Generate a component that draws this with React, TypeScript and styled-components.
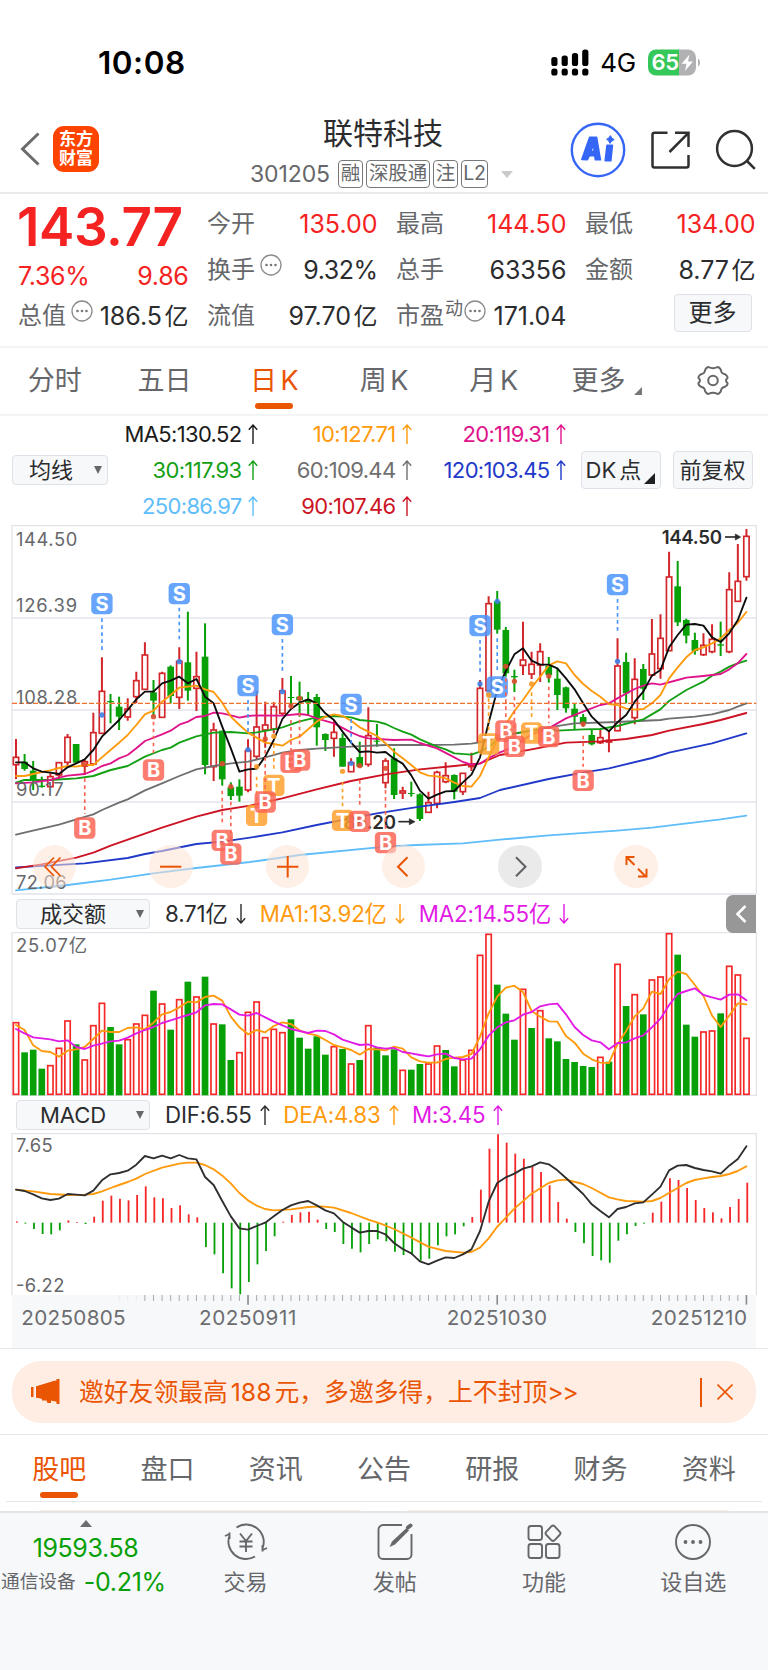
import React from "react";
import styled, { createGlobalStyle } from "styled-components";

const ORANGE = "#ea5504";
const UP = "#f52222";
const DOWN = "#07a007";
const INK = "#2b2c2e";
const GREY = "#66676a";
const LINE = "#e6e7ea";
const FONT = `Inter, "Noto Sans CJK SC", sans-serif`;

const Global = createGlobalStyle`
  * { box-sizing: border-box; }
  body { margin: 0; background: #fff; font-family: ${FONT}; color: ${INK}; -webkit-font-smoothing: antialiased; }
`;

const Page = styled.div`
  width: 768px;
  height: 1670px;
  display: flex;
  flex-direction: column;
  overflow: hidden;
  background: #fff;
`;

/* ---------- status bar ---------- */
const StatusBar = styled.div`
  height: 108px;
  flex: none;
  padding: 17px 67px 0 98px;
  display: flex;
  align-items: center;
  justify-content: space-between;
  color: #000;
`;
const Clock = styled.div`
  font-size: 31.5px;
  font-weight: 600;
  line-height: 36px;
  letter-spacing: 0.5px;
`;
const StatusRight = styled.div`
  display: flex;
  align-items: center;
  height: 36px;
`;
const Network = styled.span`
  font-size: 26px;
  line-height: 36px;
  margin: 1px 12px 0 11px;
  letter-spacing: -0.2px;
`;

/* ---------- header ---------- */
const Header = styled.header`
  height: 86px;
  flex: none;
  border-bottom: 2px solid #e8e9ea;
  display: grid;
  grid-template-columns: 250px 1fr 206px;
`;
const HeaderLeft = styled.div`
  display: flex;
  align-items: center;
  padding: 0 0 2px 19px;
`;
const Logo = styled.div`
  width: 46px;
  height: 46px;
  margin-left: 12px;
  border-radius: 11px;
  background: #ff4400;
  color: #fff;
  font-size: 17px;
  font-weight: 700;
  line-height: 19px;
  text-align: center;
  padding-top: 4px;
`;
const HeaderMid = styled.div`
  padding-top: 6px;
`;
const StockName = styled.h1`
  margin: 0 0 0 73px;
  font-size: 30px;
  font-weight: 400;
  line-height: 39px;
  white-space: nowrap;
`;
const CodeRow = styled.div`
  display: flex;
  align-items: center;
  gap: 3px;
  margin-top: 7px;
  height: 28px;
  color: ${GREY};
`;
const Code = styled.span`
  font-size: 23px;
  line-height: 28px;
  width: 85px;
  letter-spacing: -0.1px;
`;
const Tag = styled.span<{ $w: number }>`
  width: ${(p) => p.$w}px;
  height: 28px;
  border: 1.5px solid #77787a;
  border-radius: 4px;
  font-size: 19.5px;
  line-height: 25px;
  text-align: center;
  white-space: nowrap;
  letter-spacing: -0.2px;
`;
const Caret = styled.i<{ $w: number; $h: number; $c: string; $up?: boolean }>`
  width: 0;
  height: 0;
  flex: none;
  border-left: ${(p) => p.$w / 2}px solid transparent;
  border-right: ${(p) => p.$w / 2}px solid transparent;
  ${(p) => (p.$up ? "border-bottom" : "border-top")}: ${(p) => p.$h}px solid ${(p) => p.$c};
`;
const TagCaret = styled(Caret)`
  margin-left: 10px;
`;
const HeaderRight = styled.div`
  display: flex;
  align-items: center;
  gap: 25px;
  padding: 0 0 1px 8px;
  & > svg {
    flex: none;
  }
`;

/* ---------- quote ---------- */
const Quote = styled.section`
  height: 154px;
  flex: none;
  border-bottom: 2px solid #f3f4f5;
  padding: 7px 12px 0 18px;
  display: grid;
  grid-template-columns: repeat(4, 170.500px);
  column-gap: 18.500px;
`;
const QuoteCol = styled.div`
  display: flex;
  flex-direction: column;
`;
const Price = styled.div`
  height: 54px;
  font-size: 53px;
  line-height: 52px;
  font-weight: 600;
  color: ${UP};
  letter-spacing: -0.4px;
  margin-left: -1px;
`;
const Change = styled.div`
  height: 38px;
  padding-top: 3px;
  display: flex;
  align-items: center;
  justify-content: space-between;
  font-size: 25px;
  color: ${UP};
  letter-spacing: -0.3px;
`;
const Cell = styled.div`
  height: 46px;
  display: flex;
  align-items: center;
  white-space: nowrap;
`;
const Label = styled.span`
  font-size: 24px;
  line-height: 46px;
  color: ${GREY};
`;
const Value = styled.span<{ $c?: string }>`
  margin-left: auto;
  font-size: 25px;
  line-height: 46px;
  letter-spacing: 0;
  color: ${(p) => p.$c || INK};
`;
const TightValue = styled(Value)`
  letter-spacing: -0.5px;
`;
const Unit = styled.span`
  font-size: 24px;
  letter-spacing: 0;
  margin-left: 2.5px;
`;
const Sup = styled.sup`
  font-size: 18px;
  line-height: 20px;
  color: ${GREY};
  margin: -14px -4px 0 1px;
`;
const InfoSvg = styled.svg`
  margin: -10px 0 0 5px;
  flex: none;
`;
const MoreButton = styled.button`
  margin: 1px 4px 0 auto;
  width: 78px;
  height: 38px;
  padding: 0;
  border: 1.5px solid #dfe1e8;
  border-radius: 4px;
  background: #f7f8fa;
  font: 24px/34px ${FONT};
  color: ${INK};
`;

/* ---------- tabs ---------- */
const Tabs = styled.nav<{ $pad: number; $top: number }>`
  height: 66px;
  flex: none;
  display: grid;
  grid-template-columns: repeat(7, minmax(0, 1fr));
  padding: ${(p) => p.$top}px ${(p) => p.$pad}px 0;
`;
const Tab = styled.div<{ $on?: boolean; $shift?: number }>`
  display: flex;
  flex-direction: column;
  align-items: center;
  white-space: nowrap;
  padding-left: ${(p) => p.$shift || 0}px;
  font-size: 27px;
  line-height: 40px;
  word-spacing: -4px;
  color: ${(p) => (p.$on ? ORANGE : GREY)};
  &::after {
    content: "";
    width: 38px;
    height: 6px;
    margin-top: 1.500px;
    border-radius: 3px;
    background: ${(p) => (p.$on ? ORANGE : "transparent")};
  }
`;
const TabText = styled.span`
  display: flex;
  align-items: center;
`;
const Corner = styled.i<{ $s: number; $c: string }>`
  width: 0;
  height: 0;
  align-self: flex-end;
  border-left: ${(p) => p.$s}px solid transparent;
  border-bottom: ${(p) => p.$s}px solid ${(p) => p.$c};
`;
const TabCorner = styled(Corner)`
  margin: 0 0 6px 9px;
`;

/* ---------- moving averages ---------- */
const MaSection = styled.section`
  height: 111px;
  flex: none;
  border-top: 2px solid #f3f4f5;
  padding: 0 12px 3px;
  display: grid;
  grid-template-columns: 96px 459px 1fr;
  align-items: center;
`;
const SmallButton = styled.button<{ $w: number; $h: number }>`
  position: relative;
  width: ${(p) => p.$w}px;
  height: ${(p) => p.$h}px;
  flex: none;
  padding: 0;
  border: 1.5px solid #dfe1e8;
  border-radius: 4px;
  background: #f7f8fa;
  font: 22px/26px ${FONT};
  color: ${INK};
  white-space: nowrap;
  display: flex;
  align-items: center;
  justify-content: center;
`;
const DropButton = styled(SmallButton)`
  justify-content: space-between;
  padding: 0 5px 0 ${(p) => (p.$w > 100 ? 23 : 16)}px;
`;
const DkButton = styled(SmallButton)`
  justify-content: flex-start;
  padding-left: 4px;
  word-spacing: -3px;
`;
const DkCorner = styled(Corner)`
  position: absolute;
  right: 5px;
  bottom: 4px;
`;
const MaGrid = styled.div`
  display: grid;
  grid-template-columns: 150px 154px 154px;
  grid-auto-rows: 35.9px;
`;
const MaItem = styled.div<{ $c: string }>`
  display: flex;
  align-items: center;
  justify-content: flex-end;
  gap: 6.500px;
  font-size: 22px;
  letter-spacing: -0.65px;
  color: ${(p) => p.$c};
  white-space: nowrap;
`;
const ButtonPair = styled.div`
  display: flex;
  gap: 12px;
  padding-left: 13.500px;
`;

/* ---------- charts ---------- */
const ChartWrap = styled.div`
  position: relative;
  flex: none;
`;
const Chart = styled.svg`
  display: block;
  flex: none;
  font-family: ${FONT};
`;
const Controls = styled.div`
  position: absolute;
  left: 33px;
  top: 320px;
  display: flex;
  gap: 72.9px;
`;
const RoundButton = styled.div<{ $grey?: boolean }>`
  width: 43.4px;
  height: 43.4px;
  border-radius: 50%;
  background: ${(p) => (p.$grey ? "rgba(226,226,226,.72)" : "rgba(253,226,211,.55)")};
`;
const IndicatorRow = styled.div`
  position: relative;
  height: 37px;
  flex: none;
  padding-left: 16px;
  display: flex;
  align-items: center;
`;
const Indicator = styled.span<{ $c: string; $gap: number }>`
  margin-left: ${(p) => p.$gap}px;
  display: flex;
  align-items: center;
  gap: 8px;
  font-size: 22.3px;
  line-height: 30px;
  letter-spacing: -0.15px;
  color: ${(p) => p.$c};
  white-space: nowrap;
`;
const Collapse = styled.div`
  margin-left: auto;
  margin-right: 12px;
  width: 30px;
  height: 38px;
  border-radius: 7px 0 0 7px;
  background: #979797;
  display: flex;
  align-items: center;
  justify-content: center;
`;

/* ---------- banner ---------- */
const BannerWrap = styled.div`
  height: 87px;
  flex: none;
  border-top: 1px solid ${LINE};
  border-bottom: 1.5px solid ${LINE};
  padding: 12px 12px 0;
`;
const Banner = styled.div`
  height: 62px;
  border-radius: 29px;
  background: #ffede4;
  color: ${ORANGE};
  display: flex;
  align-items: center;
  padding: 0 23.500px 0 19px;
  font-size: 24.8px;
  white-space: nowrap;
`;
const BannerText = styled.span`
  margin: -5px 0 0 19px;
  flex: 1;
  word-spacing: -4px;
`;
const Chevrons = styled.span`
  letter-spacing: -1.500px;
`;
const BannerSplit = styled.i`
  width: 1.5px;
  height: 29px;
  background: ${ORANGE};
  margin-right: 15px;
`;
const FeedEdge = styled.div`
  height: 10px;
  flex: none;
  overflow: hidden;
  margin: 0 6px;
  border-top: 1.5px solid ${LINE};
  padding: 8px 28px 0;
  display: flex;
  gap: 36px;
`;
const FeedCard = styled.div`
  flex: 1;
  height: 10px;
  border-radius: 8px 8px 0 0;
  background: #fdeee6;
`;

/* ---------- bottom bar ---------- */
const Bottom = styled.footer`
  flex: 1;
  border-top: 2px solid #e3e4e7;
  background: #f7f8fa;
  display: grid;
  grid-template-columns: 171px repeat(4, 149.25px);
`;
const IndexCell = styled.div`
  display: flex;
  flex-direction: column;
  align-items: center;
  padding-top: 7px;
  color: ${DOWN};
  font-size: 25px;
`;
const IndexValue = styled.div`
  line-height: 30px;
  margin-top: 6px;
  letter-spacing: -0.4px;
`;
const IndexRow = styled.div`
  display: flex;
  align-items: center;
  align-self: flex-start;
  gap: 8px;
  margin: 3px 0 0 1px;
  line-height: 32px;
  letter-spacing: -0.3px;
  white-space: nowrap;
`;
const IndexName = styled.span`
  font-size: 18.7px;
  letter-spacing: 0;
  color: ${GREY};
`;
const NavItem = styled.div`
  display: flex;
  flex-direction: column;
  align-items: center;
  padding-top: 10px;
  font-size: 22px;
  line-height: 30px;
  color: ${GREY};
`;
const NavIcon = styled.svg`
  margin-bottom: 6px;
  overflow: visible;
`;

const Info = () => (
  <InfoSvg width="22" height="22" viewBox="0 0 22 22" fill="none" stroke="#8a8b8e">
    <circle cx="11" cy="11" r="10" strokeWidth="1.3" />
    <g fill="#77787b" stroke="none">
      <circle cx="6.5" cy="11" r="1.3" />
      <circle cx="11" cy="11" r="1.3" />
      <circle cx="15.5" cy="11" r="1.3" />
    </g>
  </InfoSvg>
);

const Arrow = ({ down }: { down?: boolean }) => (
  <svg width="10" height="20" viewBox="0 0 10 20" fill="none" stroke="currentColor" strokeWidth="1.4">
    <path d={down ? "M5 0V19M.8 14.3L5 19l4.2-4.7" : "M5 20V1M.8 5.7L5 1l4.2 4.7"} />
  </svg>
);

/* ---------- chart data: all series share a three-units-per-pixel grid ---------- */
const X0 = 48;
const STEP = 25.78;
const bx = (i: number) => X0 + STEP * i;

type Candle = [number, number, number, number, number];
// [rising, bodyTop, bodyBottom, high, low]
const candles: Candle[] = [
  [1,712,734,657,777],[0,725,747,702,752],[0,752,780,723,810],[0,797,801,770,803],[1,770,800,760,802],
  [1,728,765,727,780],[1,652,727,642,735],[0,672,728,672,728],[1,725,738,720,765],[1,638,732,578,735],
  [1,514,640,412,642],[0,543,547,522,610],[0,560,590,530,630],[1,567,591,535,602],[1,482,530,455,550],
  [1,405,508,367,510],[0,517,542,480,590],[1,460,592,455,593],[0,440,528,436,550],[1,424,532,382,567],
  [0,427,512,275,542],[1,470,505,395,573],[0,410,735,310,763],[1,630,740,608,783],[0,632,778,632,797],
  [0,802,828,787,840],[0,800,827,778,845],[1,692,810,658,817],[1,621,709,512,717],[1,615,630,545,683],
  [1,560,627,547,640],[1,513,580,474,585],[0,531,534,468,560],[0,530,540,485,590],[0,538,548,516,585],
  [0,531,622,522,677],[0,642,660,640,693],[1,637,655,600,710],[0,654,740,640,740],[1,728,755,715,757],
  [0,711,740,665,740],[1,647,733,562,740],[0,662,665,612,680],[1,723,788,715,805],[0,715,825,685,837],
  [1,813,819,800,837],[0,819,822,785,830],[0,823,897,820,903],[1,848,877,815,878],[1,757,850,752,865],
  [1,767,785,727,790],[0,765,815,763,838],[1,760,815,760,825],[1,735,740,698,753],[1,505,665,480,667],
  [1,251,512,229,514],[0,244,329,213,341],[0,330,460,321,470],[0,468,472,449,516],[1,420,436,305,465],
  [1,433,462,395,477],[1,395,435,370,486],[0,437,465,411,488],[0,476,525,445,570],[0,502,565,500,578],
  [0,566,590,552,630],[0,591,612,582,620],[0,645,673,628,676],[1,653,668,628,672],[1,661,666,630,697],
  [1,438,632,355,634],[0,426,520,398,550],[1,478,593,415,613],[0,447,506,432,540],[1,402,465,297,470],
  [1,355,446,283,476],[1,171,392,95,393],[0,199,307,123,318],[0,300,347,296,370],[0,360,393,338,404],
  [1,376,404,340,408],[1,358,395,313,400],[0,373,377,305,408],[1,209,395,157,400],[1,184,244,72,245],
  [1,49,170,27,182],
];

// one value per bar
const perBar = (vals: number[]) => vals.map((v, i) => `${bx(i).toFixed(1)},${v}`).join(" ");

const ma5 = perBar([727,727,745,755,758,762,742,730,718,690,650,625,600,570,538,515,515,490,482,470,490,477,530,550,620,685,755,748,746,710,660,597,567,548,538,550,580,600,635,668,696,694,698,696,716,731,766,812,836,824,814,813,787,764,712,608,510,453,403,385,422,434,434,445,475,508,550,590,615,634,607,585,545,515,467,450,382,345,314,312,317,352,366,340,300,233]);
const ma10 = perBar([768,768,762,756,751,744,738,740,735,735,712,690,668,645,615,583,572,545,525,503,500,497,508,516,548,590,615,638,653,668,672,677,660,650,628,605,590,583,588,602,622,635,648,670,695,715,735,757,767,769,775,788,798,800,768,712,660,613,573,540,503,470,436,424,430,465,492,513,530,552,555,566,569,567,550,525,475,442,412,390,382,370,355,330,308,276]);
const ma20 = "48,790 99,787 151,780 177,773 203,767 254,762 280,752 306,738 332,730 357,715 383,705 409,685 435,663 486,643 512,632 538,614 564,605 589,591 615,588 641,578 667,580 693,586 718,593 744,588 770,586 847,587 899,582 924,585 950,595 1002,610 1053,637 1079,648 1105,655 1182,660 1234,659 1260,669 1311,685 1363,712 1389,726 1414,734 1440,731 1466,714 1500,697 1543,680 1569,660 1595,643 1646,625 1698,595 1749,575 1801,555 1827,550 1852,535 1904,507 1930,497 1956,490 1981,494 2033,480 2059,473 2110,468 2162,462 2188,448 2213,430 2239,402";
const ma30 = "48,788 73,780 151,780 229,775 280,768 332,750 383,738 435,710 486,690 512,683 538,668 589,649 641,638 693,636 744,640 770,637 821,628 847,622 899,604 950,592 1002,588 1053,592 1079,600 1131,605 1157,612 1182,624 1208,635 1234,644 1260,658 1311,680 1337,688 1363,700 1414,704 1440,695 1466,680 1500,655 1543,640 1595,632 1646,628 1672,632 1749,628 1801,627 1852,618 1930,598 1981,568 2007,543 2059,510 2110,485 2136,467 2162,455 2188,440 2213,430 2239,422";
const ma60 = "48,944 73,938 177,914 229,898 280,883 306,870 357,848 383,838 435,811 486,790 538,768 589,748 641,738 693,730 744,725 796,712 847,698 899,690 950,686 1053,680 1157,675 1260,675 1363,674 1414,671 1440,667 1500,650 1550,640 1646,622 1724,610 1852,606 1981,600 2007,596 2085,590 2136,583 2188,570 2213,560 2239,550";
const ma90 = "48,1045 125,1033 229,1013 280,998 332,977 409,950 486,923 589,890 667,870 750,857 847,835 950,808 1053,783 1157,763 1260,748 1363,738 1440,730 1500,705 1595,688 1698,668 1801,664 1878,657 1956,645 2007,632 2110,612 2162,600 2239,579";
const ma120 = "48,1042 254,1030 383,1014 435,1002 486,993 589,972 667,965 750,953 847,937 950,915 1053,895 1131,880 1260,860 1363,846 1440,834 1500,810 1646,777 1749,758 1827,745 1956,714 2007,698 2136,670 2239,640";
const ma250 = "48,1111 203,1095 332,1079 460,1060 589,1044 750,1026 899,1005 1157,980 1250,975 1389,970 1500,959 1646,946 1852,932 1956,923 2036,913 2162,898 2239,887";

type Signal = [number, "S" | "B" | "T", number, number, number, number];
// [bar, kind, badgeCentre, dot, dashStart, dashEnd]
const signals: Signal[] = [
  [10,"S",251,585,295,400],[19,"S",221,425,263,368],[28,"T",886,740,770,845],[27,"S",497,689,540,642],
  [31,"S",314,515,357,462],[39,"S",553,730,597,680],[54,"S",317,492,360,465],[56,"S",501,244,355,460],
  [70,"S",194,424,237,342],[8,"B",924,734,775,882],[16,"B",750,590,605,708],[24,"B",961,731,812,918],
  [25,"B",1002,800,845,965],[30,"T",796,649,672,755],[29,"B",846,657,690,808],[32,"B",727,558,600,690],
  [33,"B",720,535,578,680],[38,"T",901,754,785,860],[40,"B",904,737,780,862],[43,"B",968,745,810,927],
  [55,"T",672,525,535,632],[60,"T",639,492,517,597],[57,"B",633,439,475,592],[58,"B",679,484,530,640],
  [62,"B",650,468,500,610],[66,"B",781,612,647,740],
];
const SIGNAL_FILL = { S: "#4a94fb", B: "#fc6453", T: "#ffa02b" };
const SIGNAL_DOT = { S: "#3f7fe6", B: "#dd4a2e", T: "#f59b26" };

const volTops = [398,489,481,538,527,475,393,465,510,407,340,413,465,449,402,376,304,342,421,329,277,321,262,402,405,512,488,367,336,443,418,428,390,445,478,441,496,470,479,522,512,407,474,498,480,541,541,524,522,468,482,531,510,481,196,133,286,373,451,298,416,362,447,456,509,518,530,533,502,517,223,350,314,375,270,261,131,196,406,442,426,423,372,229,255,445];
const VOL_RED = new Set([0,4,5,6,8,9,10,13,14,15,17,19,21,23,26,27,28,29,30,31,37,39,41,45,48,49,52,53,54,55,59,61,68,70,72,74,75,76,80,81,83,84,85]);
const volMa1 = perBar([405,420,466,483,486,500,482,478,471,447,422,426,426,414,412,418,398,373,366,352,335,337,321,317,332,380,412,433,420,427,408,397,402,421,431,436,450,465,472,480,494,477,478,481,470,476,502,514,518,518,507,503,501,492,440,370,320,293,287,306,363,380,394,395,438,458,491,508,518,519,462,423,379,355,305,312,268,245,252,285,318,377,411,377,340,343]);
const volMa2 = perBar([417,430,442,445,448,454,451,471,477,467,461,454,452,443,430,420,411,399,391,383,375,367,346,342,343,358,374,377,369,382,395,406,417,423,429,422,423,433,449,457,465,463,472,476,474,486,490,495,499,493,491,504,508,506,478,437,412,397,391,374,366,349,343,341,373,411,435,451,457,478,459,457,445,436,412,386,345,312,303,295,315,322,329,314,313,331]);

const macdEnds = [379,386,402,417,418,406,376,381,387,365,317,302,311,316,300,274,307,310,339,331,358,367,456,478,535,580,598,561,508,468,424,380,360,352,350,374,402,411,447,461,472,447,433,439,470,480,480,497,491,451,424,418,394,366,284,161,118,143,176,191,216,231,271,321,371,411,445,483,496,503,437,418,393,386,353,320,250,255,279,315,339,352,370,336,312,263];
const dif = perBar([284,288,298,310,315,311,297,299,301,287,256,238,234,227,209,183,190,182,190,180,190,193,246,270,318,364,400,404,393,383,364,345,331,323,318,331,346,355,380,397,413,408,408,418,444,462,475,499,508,497,487,489,478,463,408,320,264,247,236,221,214,202,208,226,249,273,297,328,348,367,342,336,325,322,299,275,226,212,210,219,225,229,236,212,192,154]);
const dea = "48,284 99,289 151,297 203,300 254,299 280,297 306,289 332,279 357,270 383,261 409,251 435,237 486,218 538,206 564,203 589,203 615,210 641,223 667,242 693,266 718,294 744,316 770,332 795,342 821,346 873,343 925,336 964,334 1002,338 1053,354 1105,374 1140,385 1182,402 1234,428 1285,455 1337,468 1389,473 1414,471 1440,458 1466,430 1491,396 1543,341 1595,296 1646,264 1672,256 1698,254 1749,267 1775,279 1827,307 1852,313 1878,318 1930,320 1956,318 1981,309 2007,294 2033,279 2059,264 2084,255 2110,250 2136,246 2162,243 2188,237 2213,228 2239,214";

const Poly = ({ pts, c, w = 5.6 }: { pts: string; c: string; w?: number }) => (
  <polyline points={pts} fill="none" stroke={c} strokeWidth={w} strokeLinejoin="round" strokeLinecap="round" />
);

const AxisText = ({ x = 48, y, len, children }: { x?: number; y: number; len: number; children: string }) => (
  <text x={x} y={y + 20} fontSize="55" fill="#66676a" textLength={len}>{children}</text>
);

function PriceChart() {
  return (
    <ChartWrap>
      <Chart width="768" height="370" viewBox="0 15 2304 1110">
        <path d="M36 17H2269V1122H36Z" fill="none" stroke="#e2e4ea" strokeWidth="4" />
        <path d="M36 294H2269M36 570H2269M36 846H2269" stroke="#e4e6ee" strokeWidth="5" />
        {candles.map(([up, t, b, hi, lo], i) => {
          const x = bx(i);
          return up ? (
            <g key={i} stroke="#d3262b" fill="none">
              <path d={`M${x} ${hi}V${t}M${x} ${b}V${lo}`} strokeWidth="6" />
              <rect x={x - 8} y={t} width="16" height={b - t} strokeWidth="5" />
            </g>
          ) : (
            <g key={i} fill="#07a007">
              <rect x={x - 3} y={hi} width="6" height={lo - hi} />
              <rect x={x - 10} y={t} width="20" height={b - t} />
            </g>
          );
        })}
        <Poly pts={ma250} c="#5fbdfa" />
        <Poly pts={ma120} c="#2139c8" />
        <Poly pts={ma90} c="#cc1424" />
        <Poly pts={ma60} c="#6f6f70" />
        <Poly pts={ma30} c="#14a014" />
        <Poly pts={ma20} c="#e0148a" />
        <Poly pts={ma10} c="#ff9a0c" />
        <Poly pts={ma5} c="#0c0c0c" />
        <path d="M36 550H2269" stroke="#f0702c" strokeWidth="4" strokeDasharray="15 6" />
        <AxisText y={59} len={184}>144.50</AxisText>
        <AxisText y={255} len={183}>126.39</AxisText>
        <AxisText y={532} len={184}>108.28</AxisText>
        <AxisText y={809} len={143}>90.17</AxisText>
        <AxisText y={1086} len={152}>72.06</AxisText>
        <g fill={INK} stroke={INK} strokeWidth="5">
          <text x="1985" y="72" fontSize="56" fontWeight="600" strokeWidth="0" textLength="181">144.50</text>
          <path d="M2175 51H2214" />
          <path d="M2206 42L2222 51L2206 60Z" strokeWidth="2" />
          <text x="1031" y="926" fontSize="56" fontWeight="600" strokeWidth="0" textLength="157">86.20</text>
          <path d="M1195 905H1236" />
          <path d="M1228 896L1245 905L1228 914Z" strokeWidth="2" />
        </g>
        {signals.map(([i, k, y, dot, a, b], n) => (
          <g key={n}>
            <path d={`M${bx(i)} ${a}V${b}`} stroke={SIGNAL_FILL[k]} strokeWidth="5" strokeDasharray="11 10" />
            <circle cx={bx(i)} cy={dot} r="8" fill={SIGNAL_DOT[k]} fillOpacity=".9" />
            <rect x={bx(i) - 32} y={y - 32} width="64" height="64" rx="13" fill={SIGNAL_FILL[k]} fillOpacity=".84" />
            <text x={bx(i)} y={y + 21.5} fontSize="60" fontWeight="700" fill="#fff" textAnchor="middle">{k}</text>
          </g>
        ))}
      </Chart>
      <Controls>
        <RoundButton>
          <svg viewBox="0 0 43.4 43.4" fill="none" stroke={ORANGE} strokeWidth="1.7"><path d="M21 12.5L12 21.7L21 31M27.5 12.5L18.5 21.7L27.5 31" /></svg>
        </RoundButton>
        <RoundButton>
          <svg viewBox="0 0 43.4 43.4" fill="none" stroke={ORANGE} strokeWidth="2"><path d="M11 21.7H32.4" /></svg>
        </RoundButton>
        <RoundButton>
          <svg viewBox="0 0 43.4 43.4" fill="none" stroke={ORANGE} strokeWidth="2"><path d="M11 21.7H32.4M21.7 11V32.4" /></svg>
        </RoundButton>
        <RoundButton>
          <svg viewBox="0 0 43.4 43.4" fill="none" stroke={ORANGE} strokeWidth="2"><path d="M25.5 12.2L16 21.7L25.5 31.2" /></svg>
        </RoundButton>
        <RoundButton $grey>
          <svg viewBox="0 0 43.4 43.4" fill="none" stroke="#5f6063" strokeWidth="2"><path d="M18 12.2L27.5 21.7L18 31.2" /></svg>
        </RoundButton>
        <RoundButton>
          <svg viewBox="0 0 43.4 43.4" fill="none" stroke={ORANGE} strokeWidth="2"><path d="M12.5 20V12H20.5M12.5 12L20.5 20M24 23.7L32 31.7M32.5 23.7V31.5H24" /></svg>
        </RoundButton>
      </Controls>
    </ChartWrap>
  );
}

function VolumeChart() {
  return (
    <Chart width="768" height="164" viewBox="0 126 2304 492">
      <path d="M36 128H2269V616H36Z" fill="none" stroke="#e2e4ea" strokeWidth="4" />
      {volTops.map((t, i) =>
        VOL_RED.has(i) ? (
          <rect key={i} x={bx(i) - 8} y={t} width="16" height={613 - t} fill="#fff" stroke="#f52727" strokeWidth="5" />
        ) : (
          <rect key={i} x={bx(i) - 10} y={t - 2} width="20" height={618 - t} fill="#07a007" />
        )
      )}
      <Poly pts={volMa1} c="#ff9a0c" />
      <Poly pts={volMa2} c="#e21ae6" />
      <AxisText y={166} len={213}>25.07亿</AxisText>
    </Chart>
  );
}

function MacdChart() {
  return (
    <Chart width="768" height="215" viewBox="0 114 2304 645">
      <path d="M36 600H2268V759H36Z" fill="#f7f8fa" />
      <path d="M36 600V116H2269V600" fill="none" stroke="#e2e4ea" strokeWidth="4" />
      {macdEnds.map((e, i) => (
        <path key={i} d={`M${bx(i) + 2.5} 383V${e}`} stroke={e < 383 ? "#f52727" : "#07a007"} strokeWidth="5.5" />
      ))}
      <Poly pts={dea} c="#ff9a0c" />
      <Poly pts={dif} c="#2e2e2e" />
      {macdEnds.map((_, i) => {
        const major = i === 27 || i === 56 || i === 85;
        return i >= 12 ? (
          <path key={i} d={`M${bx(i)} 600V${major ? 629 : 618}`} stroke={major ? "#8c8d90" : "#a8a9ac"} strokeWidth={major ? 5 : 3} opacity={i < 15 ? 0.15 : 1} />
        ) : null;
      })}
      <AxisText y={151} len={110}>7.65</AxisText>
      <AxisText y={570} len={145}>-6.22</AxisText>
      <g fontSize="62" fill="#6c6d70">
        <text x="64" y="691" textLength="313">20250805</text>
        <text x="597" y="691" textLength="292">20250911</text>
        <text x="1340" y="691" textLength="301">20251030</text>
        <text x="1952" y="691" textLength="289">20251210</text>
      </g>
    </Chart>
  );
}

export default function App() {
  return (
    <>
      <Global />
      <Page>
        <StatusBar>
          <Clock>10:08</Clock>
          <StatusRight>
            <svg width="38" height="27" viewBox="0 0 38 27">
              {[0, 1, 2, 3].map((n) => (
                <g key={n}>
                  <rect x={n * 10.3 + 0.3} y={[8, 6.5, 4, 0.5][n]} width="6.2" height={[9, 10.5, 13, 16.5][n]} rx="2.6" />
                  <rect x={n * 10.3 + 0.3} y="19.5" width="6.2" height="7" rx="2.6" />
                </g>
              ))}
            </svg>
            <Network>4G</Network>
            <svg width="53" height="27" viewBox="0 0 53 27">
              <path d="M8 .5H31V26.5H8A8 8 0 0 1 0 18.5V8.5A8 8 0 0 1 8 .5Z" fill="#34c759" />
              <path d="M31 .5H40A8 8 0 0 1 48 8.5V18.5A8 8 0 0 1 40 26.5H31Z" fill="#b1b1b3" />
              <path d="M50 9.5C51.5 10.5 52 12 52 13.5S51.5 16.5 50 17.5Z" fill="#b1b1b3" />
              <text x="3.5" y="21.3" fontSize="22" fontWeight="600" fill="#fff" textLength="27.5" fontFamily="Inter">65</text>
              <path d="M41.5 5.5L33.5 14.8H38.5L37 22L45 12.5H40Z" fill="#fff" />
            </svg>
          </StatusRight>
        </StatusBar>

        <Header>
          <HeaderLeft>
            <svg width="22" height="34" viewBox="0 0 22 34" fill="none" stroke="#6b6b6d" strokeWidth="3">
              <path d="M19.5 1.5L3.5 17L19.5 32.5" />
            </svg>
            <Logo>东方<br />财富</Logo>
          </HeaderLeft>
          <HeaderMid>
            <StockName>联特科技</StockName>
            <CodeRow>
              <Code>301205</Code>
              <Tag $w={25}>融</Tag>
              <Tag $w={64}>深股通</Tag>
              <Tag $w={25}>注</Tag>
              <Tag $w={27}>L2</Tag>
              <TagCaret $w={13} $h={7} $c="#cacaca" />
            </CodeRow>
          </HeaderMid>
          <HeaderRight>
            <svg width="56" height="56" viewBox="0 0 56 56">
              <circle cx="28" cy="28" r="26.2" fill="none" stroke="#3566f6" strokeWidth="2.4" />
              <g fill="#3566f6" stroke="#3566f6" strokeWidth="1.6" strokeLinejoin="round">
                <path fillRule="evenodd" d="M11.8 37.4L19.6 15.4H26.6L30.4 37.8H25.4L24.8 33.8H19.2L17.4 37.6ZM20.8 29.2H24.2L23.6 22.6Z" />
                <path d="M37 23.4H42.4L40.8 38.8H35.2Z" />
                <path d="M40.3 13.6L42 16.2L44.2 17.6L41.6 19.2L40 21.4L38.6 18.8L36.6 17.2L38.9 16Z" strokeWidth="1" />
              </g>
            </svg>
            <svg width="39" height="40" viewBox="0.5 0 39 40" fill="none" stroke="#2f3032" strokeWidth="2.5">
              <path d="M17 2.8H4A2 2 0 0 0 2 4.8V35.5A2 2 0 0 0 4 37.5H36A2 2 0 0 0 38 35.5V25M24.5 2.8H38V17M37.5 3.3L19 22" />
            </svg>
            <svg width="42" height="42" viewBox="0 0 42 42" fill="none" stroke="#2f3032" strokeWidth="2.5">
              <circle cx="19.5" cy="19.5" r="17.4" />
              <path d="M32 32L39.8 39.8" />
            </svg>
          </HeaderRight>
        </Header>

        <Quote>
          <QuoteCol>
            <Price>143.77</Price>
            <Change><span>7.36%</span><span>9.86</span></Change>
            <Cell><Label>总值</Label><Info /><Value>186.5<Unit>亿</Unit></Value></Cell>
          </QuoteCol>
          <QuoteCol>
            <Cell><Label>今开</Label><Value $c={UP}>135.00</Value></Cell>
            <Cell><Label>换手</Label><Info /><TightValue>9.32%</TightValue></Cell>
            <Cell><Label>流值</Label><Value>97.70<Unit>亿</Unit></Value></Cell>
          </QuoteCol>
          <QuoteCol>
            <Cell><Label>最高</Label><Value $c={UP}>144.50</Value></Cell>
            <Cell><Label>总手</Label><Value>63356</Value></Cell>
            <Cell><Label>市盈</Label><Sup>动</Sup><Info /><Value>171.04</Value></Cell>
          </QuoteCol>
          <QuoteCol>
            <Cell><Label>最低</Label><Value $c={UP}>134.00</Value></Cell>
            <Cell><Label>金额</Label><Value>8.77<Unit>亿</Unit></Value></Cell>
            <MoreButton>更多</MoreButton>
          </QuoteCol>
        </Quote>

        <Tabs $pad={0} $top={13}>
          <Tab>分时</Tab>
          <Tab>五日</Tab>
          <Tab $on>日 K</Tab>
          <Tab>周 K</Tab>
          <Tab>月 K</Tab>
          <Tab $shift={7}><TabText>更多<TabCorner $s={8} $c="#77787b" /></TabText></Tab>
          <Tab>
            <svg width="32" height="40" viewBox="0 0.5 32 40" fill="none" stroke={GREY} strokeWidth="2" strokeLinejoin="round">
              <path d="M11.5 6.5Q16 9 20.5 6.5Q23.5 7 24.5 11.5Q25 13 28.5 14Q31 16 30.5 17.5Q27.5 20 30.5 22.5Q31 24.5 28.5 26Q25 27 24.5 28.5Q23.5 33 20.5 33.5Q16 31 11.5 33.5Q8.5 33 7.5 28.5Q7 27 3.5 26Q1 24.5 1.5 22.5Q4.5 20 1.5 17.5Q1 16 3.5 14Q7 13 7.5 11.5Q8.5 7 11.5 6.5Z" />
              <circle cx="16" cy="20" r="4.8" />
            </svg>
          </Tab>
        </Tabs>

        <MaSection>
          <DropButton $w={96} $h={30}>均线<Caret $w={9} $h={8} $c={GREY} /></DropButton>
          <MaGrid>
            <MaItem $c="#1a1a1a">MA5:130.52<Arrow /></MaItem>
            <MaItem $c="#ff9a0c">10:127.71<Arrow /></MaItem>
            <MaItem $c="#e0148a">20:119.31<Arrow /></MaItem>
            <MaItem $c="#14a014">30:117.93<Arrow /></MaItem>
            <MaItem $c="#6f6f70">60:109.44<Arrow /></MaItem>
            <MaItem $c="#2139c8">120:103.45<Arrow /></MaItem>
            <MaItem $c="#5fbdfa">250:86.97<Arrow /></MaItem>
            <MaItem $c="#cc1424">90:107.46<Arrow /></MaItem>
          </MaGrid>
          <ButtonPair>
            <DkButton $w={80} $h={38}>DK 点<DkCorner $s={11} $c="#1f2022" /></DkButton>
            <SmallButton $w={80} $h={38}>前复权</SmallButton>
          </ButtonPair>
        </MaSection>

        <PriceChart />

        <IndicatorRow>
          <DropButton $w={134} $h={30}>成交额<Caret $w={9} $h={8} $c={GREY} /></DropButton>
          <Indicator $c={INK} $gap={15}>8.71亿<Arrow down /></Indicator>
          <Indicator $c="#ff9a0c" $gap={14}>MA1:13.92亿<Arrow down /></Indicator>
          <Indicator $c="#e21ae6" $gap={14}>MA2:14.55亿<Arrow down /></Indicator>
          <Collapse>
            <svg width="12" height="18" viewBox="0 0 12 18" fill="none" stroke="#fff" strokeWidth="2.6"><path d="M10.5 1L2.5 9L10.5 17" /></svg>
          </Collapse>
        </IndicatorRow>
        <VolumeChart />

        <IndicatorRow>
          <DropButton $w={134} $h={30}>MACD<Caret $w={9} $h={8} $c={GREY} /></DropButton>
          <Indicator $c={INK} $gap={15}>DIF:6.55<Arrow /></Indicator>
          <Indicator $c="#ff9a0c" $gap={13.5}>DEA:4.83<Arrow /></Indicator>
          <Indicator $c="#e21ae6" $gap={13.5}>M:3.45<Arrow /></Indicator>
        </IndicatorRow>
        <MacdChart />

        <BannerWrap>
          <Banner>
            <svg width="29" height="26" viewBox="0 0 29 26" fill={ORANGE}>
              <path d="M0 8H2.5V18H0ZM5 7.5L24.5 1.5V22L20 21V24H16.5L15.5 21.5H11V19.5L5 18.5ZM25.5 0H28.5V25H25.5Z" />
              <path d="M5 7.5L27 1V23L5 18.5Z" />
            </svg>
            <BannerText>邀好友领最高 188 元，多邀多得，上不封顶<Chevrons>&gt;&gt;</Chevrons></BannerText>
            <BannerSplit />
            <svg width="16" height="16" viewBox="0 0 16 16" stroke={ORANGE} strokeWidth="1.6"><path d="M.5 .5L15.5 15.5M15.5 .5L.5 15.5" /></svg>
          </Banner>
        </BannerWrap>

        <Tabs $pad={5} $top={15}>
          <Tab $on>股吧</Tab>
          <Tab>盘口</Tab>
          <Tab>资讯</Tab>
          <Tab>公告</Tab>
          <Tab>研报</Tab>
          <Tab>财务</Tab>
          <Tab>资料</Tab>
        </Tabs>
        <FeedEdge><FeedCard /><FeedCard /></FeedEdge>

        <Bottom>
          <IndexCell>
            <Caret $up $w={13} $h={7} $c="#6b6c6f" />
            <IndexValue>19593.58</IndexValue>
            <IndexRow><IndexName>通信设备</IndexName>-0.21%</IndexRow>
          </IndexCell>
          <NavItem>
            <NavIcon width="42" height="38" viewBox="0 0 42 38" fill="none" stroke={GREY} strokeWidth="1.9">
              <path d="M11.5 4.5A17.5 17.5 0 0 1 37.5 25.5M37.5 28.5V22M37.5 27L42 25M30 33.5A17.5 17.5 0 0 1 4.5 12.5M4.5 9.5V16M4.5 11L0 13" />
              <path d="M15 10.5L21 18L27 10.5M14.5 18.5H27.5M14.5 23.5H27.5M21 18V29" />
            </NavIcon>
            交易
          </NavItem>
          <NavItem>
            <NavIcon width="36" height="38" viewBox="0 0 36 38" fill="none" stroke={GREY} strokeWidth="1.9">
              <path d="M25 2H6A4.5 4.5 0 0 0 1.5 6.5V31.5A4.5 4.5 0 0 0 6 36H30A4.5 4.5 0 0 0 34.5 31.5V11" />
              <path d="M12.5 24L15 18.5L29.5 5L32 7.5L18 21.5Z" fill={GREY} stroke="none" />
              <path d="M31 4.5L33.5 2.5" strokeWidth="4" strokeLinecap="round" />
            </NavIcon>
            发帖
          </NavItem>
          <NavItem>
            <NavIcon width="36" height="38" viewBox="0 0 36 38" fill="none" stroke={GREY} strokeWidth="1.9">
              <rect x="2.5" y="3" width="13.5" height="14" rx="2.5" />
              <rect x="2.5" y="21" width="13.5" height="14" rx="2.5" />
              <rect x="20" y="21" width="13.5" height="14" rx="2.5" />
              <path d="M25.5 3.2Q27 1.8 28.5 3.2L34 9Q35 10.3 34 11.5L28.5 17.3Q27 18.6 25.5 17.3L20 11.5Q19 10.3 20 9Z" />
            </NavIcon>
            功能
          </NavItem>
          <NavItem>
            <NavIcon width="38" height="38" viewBox="0 0 38 38" fill="none" stroke={GREY} strokeWidth="1.9">
              <circle cx="19" cy="19" r="17" />
              <g fill={GREY} stroke="none"><circle cx="11.5" cy="19" r="1.9" /><circle cx="19" cy="19" r="1.9" /><circle cx="26.5" cy="19" r="1.9" /></g>
            </NavIcon>
            设自选
          </NavItem>
        </Bottom>
      </Page>
    </>
  );
}
